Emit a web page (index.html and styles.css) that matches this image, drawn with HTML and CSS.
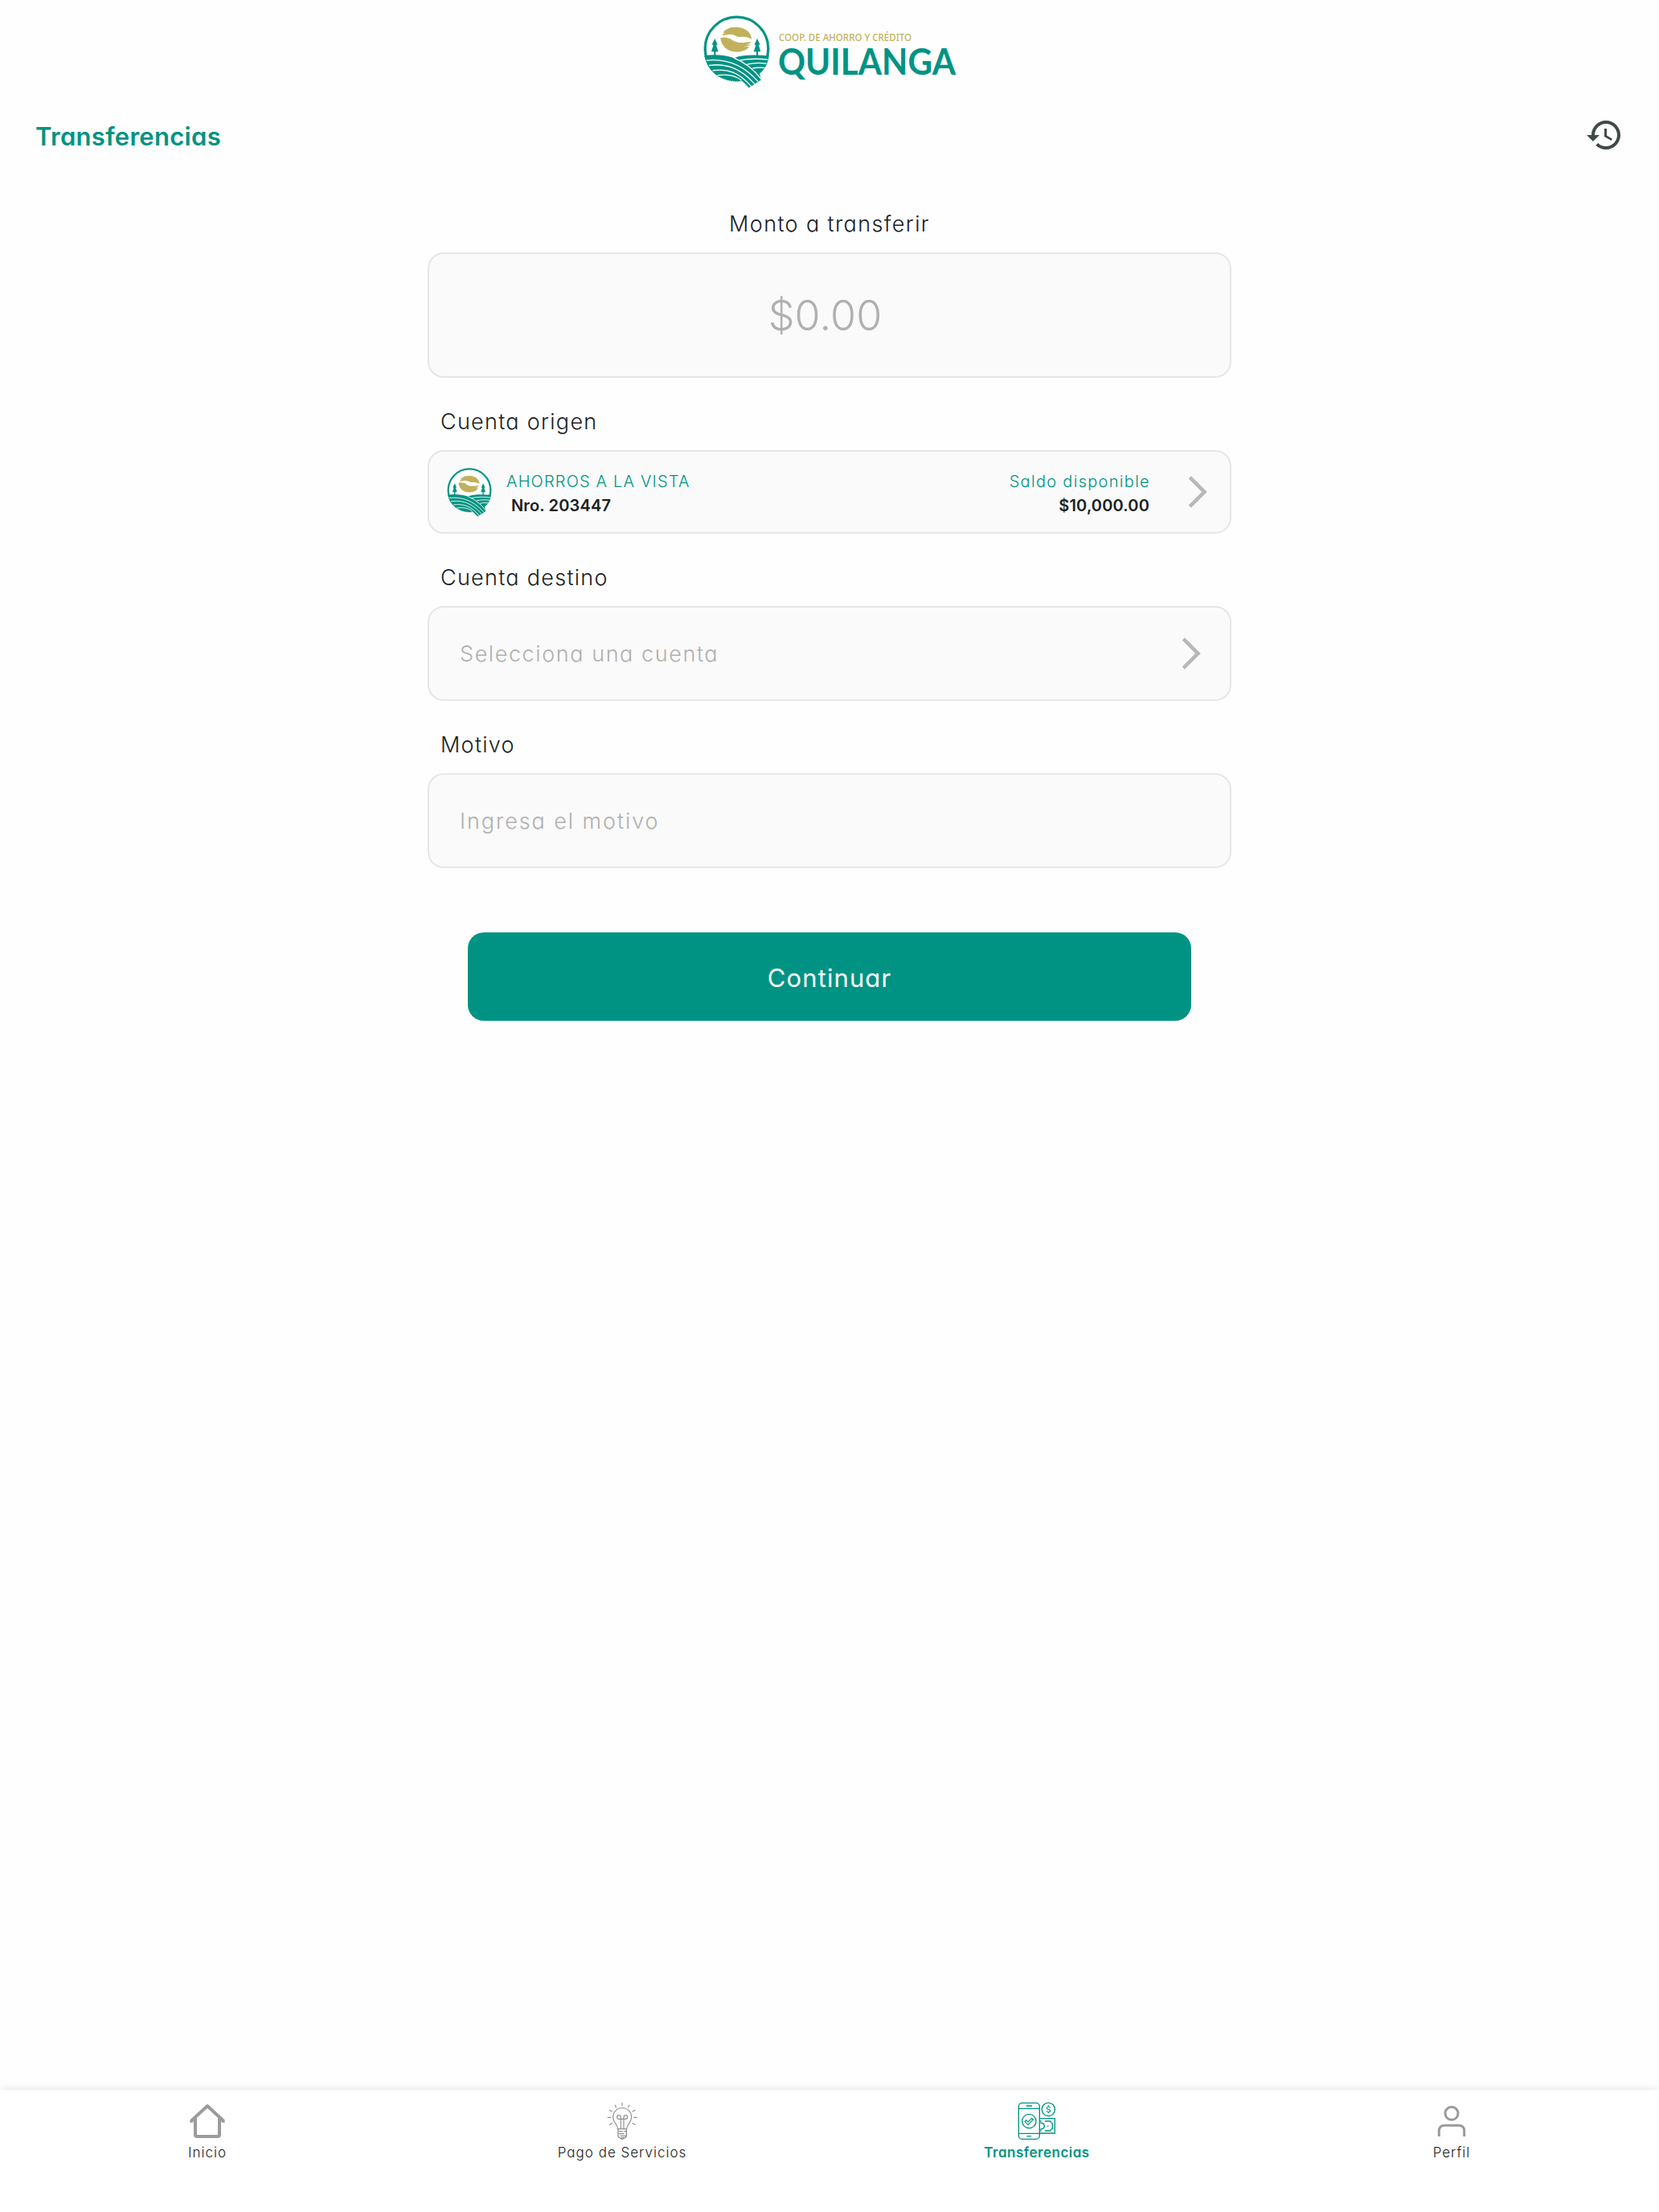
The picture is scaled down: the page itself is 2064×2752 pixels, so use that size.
FILE: index.html
```html
<!DOCTYPE html>
<html lang="es">
<head>
<meta charset="utf-8">
<title>Transferencias</title>
<link rel="stylesheet" href="styles.css">
</head>
<body>
<svg class="defs" width="0" height="0" aria-hidden="true">
  <symbol id="emblem" viewBox="45 28 250 274">
    <circle cx="170" cy="153" r="118" fill="#fff" stroke="#009383" stroke-width="9"/>
    <circle cx="170" cy="153" r="122" fill="none" stroke="#009383" stroke-width="3" stroke-dasharray="5 3"/>
    <path fill="#c1b15c" d="M120 92C132 76 152 71 175 73C203 75 225 92 226 118C215 111 200 107 186 109C170 110 164 101 150 100C138 98 128 104 117 104C116 99 122 96 129 94C125 94 121 94 120 92Z"/>
    <path fill="#c1b15c" d="M109 112C125 108 142 112 154 121C168 131 190 133 223 127C224 132 215 135 206 137C214 138 221 137 222 140C213 143 203 144 196 146C207 146 215 144 216 147C205 160 186 166 165 165C136 163 112 144 109 112Z"/>
    <path fill="#009383" d="M88 115l11 24h-6l8 25h-10v17h-6v-17h-10l8-25h-6zM247 115l11 24h-6l8 25h-10v17h-6v-17h-10l8-25h-6z"/>
    <path fill="#009383" d="M49 179C90 173 130 178 160 188C195 175 245 176 291 180C287 212 273 234 256 246L262 270L216 300C204 287 196 277 182 270C112 282 60 238 49 179Z"/>
    <g fill="none" stroke="#fff" stroke-width="4">
      <path d="M56 197C125 189 190 208 250 276"/>
      <path d="M66 216C130 207 184 225 238 286"/>
      <path d="M80 235C136 227 180 242 225 295"/>
      <path d="M98 253C140 247 168 255 188 272"/>
      <path d="M160 188C200 204 236 232 262 268"/>
      <path d="M181 197C215 190 250 190 287 194"/>
      <path d="M208 212C235 206 260 206 282 209"/>
      <path d="M229 227C245 223 260 223 276 225"/>
    </g>
  </symbol>
</svg>
<div class="app">
  <header class="brand">
    <svg width="83" height="91"><use href="#emblem"/></svg>
    <svg class="brand-text" width="222" height="91">
      <text class="brand-kind" x="1" y="32" textLength="165" lengthAdjust="spacingAndGlyphs">COOP. DE AHORRO Y CRÉDITO</text>
      <text class="brand-name" x="0" y="74" textLength="221" lengthAdjust="spacingAndGlyphs">QUILANGA</text>
    </svg>
  </header>
  <div class="titlebar">
    <h1 class="title">Transferencias</h1>
    <svg width="48" height="48" viewBox="0 0 24 24"><path fill="#3f4a47" d="M13 3c-4.970 0-9 4.030-9 9H1l3.890 3.890.07.14L9 12H6c0-3.870 3.130-7 7-7s7 3.130 7 7-3.130 7-7 7c-1.930 0-3.680-.79-4.940-2.060l-1.420 1.420C8.270 19.990 10.510 21 13 21c4.970 0 9-4.030 9-9s-4.030-9-9-9zm-1 5v5l4.280 2.540.72-1.210-3.500-2.080V8H12z"/></svg>
  </div>
  <main class="form">
    <label class="label label-center">Monto a transferir</label>
    <div class="box amount">$0.00</div>
    <label class="label">Cuenta origen</label>
    <div class="box account">
      <svg width="56" height="61"><use href="#emblem"/></svg>
      <div class="account-info">
        <span class="kind">AHORROS A LA VISTA</span>
        <span class="number">Nro. 203447</span>
      </div>
      <div class="account-balance">
        <span class="caption">Saldo disponible</span>
        <span class="money">$10,000.00</span>
      </div>
      <svg class="chevron" width="26" height="42" viewBox="0 0 26 42"><path d="M3.300 2.900L21.500 21L3.300 39.100"/></svg>
    </div>
    <label class="label">Cuenta destino</label>
    <div class="box field">
      <span class="placeholder-select">Selecciona una cuenta</span>
      <svg class="chevron" width="26" height="42" viewBox="0 0 26 42"><path d="M3.300 2.900L21.500 21L3.300 39.100"/></svg>
    </div>
    <label class="label">Motivo</label>
    <div class="box field"><span class="placeholder-reason">Ingresa el motivo</span></div>
    <button class="submit">Continuar</button>
  </main>
  <nav class="tabs">
    <a class="tab">
      <svg width="48" height="48" viewBox="42 72 144 144" fill="none" stroke="#9b9b9b" stroke-width="12" stroke-linejoin="round"><path d="M55 152v-7L114 90L173 145v7M69 136V198Q69 204 76 204H152Q159 204 159 198V136"/></svg>
      <span class="tab-label tab-label-short">Inicio</span>
    </a>
    <a class="tab">
      <svg width="48" height="48" viewBox="210 72 144 144" fill="none" stroke="#8f8f8f" stroke-width="3.500">
        <path d="M266 176C266 158 248 154 248 132A34.500 34.500 0 0 1 317 132C317 154 299 158 299 176Z"/>
        <path d="M277 175V140M288 175V140M277 140V132A7 7 0 1 0 270 139H295A7 7 0 1 0 288 132V140"/>
        <path d="M267 176V202Q267 208 275 210Q282 217 290 210Q298 208 298 202V176M270 185H284M289 185H297M270 194H290M275 202H297M278 209H289" stroke-width="4"/>
        <path d="M282 78V90M255 86L260 96M309 86L304 96M234 105L245 112M331 105L320 112M227 133H240M325 133H338M234 161L245 154M331 161L320 154"/>
      </svg>
      <span class="tab-label">Pago de Servicios</span>
    </a>
    <a class="tab tab-active">
      <svg width="48" height="48" viewBox="198 72 144 144" fill="none" stroke="#009383" stroke-width="4">
        <rect x="202" y="79" width="78" height="135" rx="13"/>
        <path d="M202 100H280M202 193H280M230 90H252M232 203H249"/>
        <circle cx="241" cy="147" r="26"/>
        <path d="M225 148L230 143L237 150L251 136L256 141L237 160Z" stroke-width="3.500"/>
        <circle cx="313" cy="103" r="24.500"/>
        <path d="M320 98Q319 93 313 93Q307 93 307 98Q307 102 313 103Q320 104 320 108Q320 113 313 113Q307 113 306 108M313 88V93M313 113V118" stroke-width="3.500"/>
        <path d="M281 137H337V192H281M281 147H287M281 183H287M300 147H320Q321 154 328 155V175Q321 176 320 183H300M283 153Q298 154 298 165Q298 176 283 177"/>
        <path d="M309 165H313"/>
      </svg>
      <span class="tab-label">Transferencias</span>
    </a>
    <a class="tab">
      <svg width="48" height="48" viewBox="66 72 144 144" fill="none" stroke="#9b9b9b" stroke-width="9"><circle cx="138" cy="118" r="24"/><path d="M91 204V184Q91 163 112 163H164Q185 163 185 184V204"/></svg>
      <span class="tab-label tab-label-short">Perfil</span>
    </a>
  </nav>
</div>
</body>
</html>
```
FILE: styles.css
```css
* { box-sizing: border-box; }
body { margin: 0; background: #fefefe; font-family: Inter, "Open Sans", sans-serif; font-feature-settings: "cv11"; color: #1b211f; }
.defs { display: block; }
.app { display: flex; flex-direction: column; height: 2752px; }

.brand { display: flex; justify-content: center; gap: 10px; height: 126px; padding: 19px 0 0; }
.brand-text { overflow: visible; font-feature-settings: normal; }
.brand-kind { font: 500 12.500px "Noto Sans", sans-serif; fill: #c1b15c; }
.brand-name { font: 700 46px Lato, sans-serif; fill: #009383; }

.titlebar { display: flex; justify-content: space-between; align-items: center; height: 84px; padding: 0 44px; }
.title { margin: 0; padding-top: 4px; font-size: 31px; font-weight: 600; line-height: 40px; letter-spacing: .3px; color: #009383; }

.form { display: flex; flex-direction: column; flex: 1; width: 1000px; margin: 0 auto; padding-top: 43px; }
.label { display: flex; align-items: center; height: 50px; padding-left: 16px; font-size: 27px; font-weight: 300; letter-spacing: 1.280px; }
.label-center { justify-content: center; padding-left: 0; letter-spacing: 1.370px; }
.box { display: flex; align-items: center; flex: none; margin: 11px 0 29px; border: 2px solid #e6e6e6; border-radius: 20px; background: #fafafa; }
.amount { justify-content: center; height: 156px; padding-right: 11px; font-size: 52px; font-weight: 300; letter-spacing: .1px; color: #b0b0b0; }
.account { height: 104px; padding: 0 27px 0 22px; font-size: 20px; }
.account-info { display: flex; flex-direction: column; margin-left: 18px; padding-top: 3px; }
.account-balance { display: flex; flex-direction: column; align-items: flex-end; margin-left: auto; padding-top: 3px; }
.kind, .caption { line-height: 30px; font-weight: 300; color: #009383; letter-spacing: 1.170px; }
.caption { margin-right: -1px; letter-spacing: 1.300px; }
.number, .money { line-height: 30px; font-weight: 600; letter-spacing: .15px; }
.number { padding-left: 6px; }
.chevron { flex: none; fill: none; stroke: #b8b8b8; stroke-width: 4.600; }
.account .chevron { margin-left: 47px; }
.field { height: 118px; padding: 0 35px 0 38px; font-size: 27px; font-weight: 300; color: #b0b0b0; justify-content: space-between; }
.placeholder-select { letter-spacing: 1.570px; }
.placeholder-reason { letter-spacing: 1.920px; }
.submit { width: 900px; height: 110px; margin: 51px auto 0; padding: 4px 0 0; flex: none; border: 0; border-radius: 20px; background: #009383; color: #fff; font: 400 31px/40px Inter, sans-serif; font-feature-settings: "cv11"; letter-spacing: 1.100px; }

.tabs { display: grid; grid-template-columns: repeat(4, 1fr); height: 152px; padding-top: 14px; background: #fff; box-shadow: 0 0 10px rgba(0, 0, 0, .12); }
.tab { display: flex; flex-direction: column; align-items: center; gap: 4px; }
.tab-label { font-size: 17px; font-weight: 300; line-height: 24px; letter-spacing: 1px; }
.tab-label-short { letter-spacing: 1px; }
.tab-active .tab-label { color: #009383; font-weight: 600; letter-spacing: .5px; }
```
